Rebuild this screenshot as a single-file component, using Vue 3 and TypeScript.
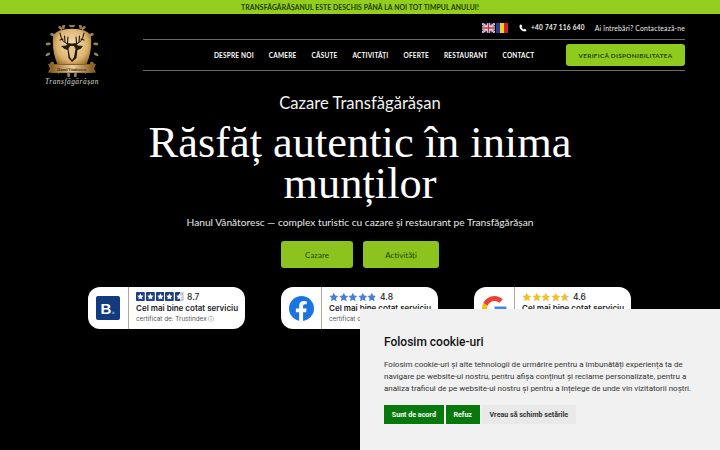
<script setup lang="ts">
const navItems = ["DESPRE NOI", "CAMERE", "CĂSUȚE", "ACTIVITĂȚI", "OFERTE", "RESTAURANT", "CONTACT"];

interface Review {
  id: string;
  score: string;
  fill: string;
  lastStar: number;
}

const reviews: Review[] = [
  { id: "b", score: "8.7", fill: "#1c3f87", lastStar: 55 },
  { id: "f", score: "4.8", fill: "#4a7fd6", lastStar: 90 },
  { id: "g", score: "4.6", fill: "#f2bf2e", lastStar: 60 },
];

const starPath = "M5 .6l1.4 2.9 3.2.4-2.3 2.2.6 3.2L5 7.8 2.1 9.3l.6-3.2L.4 3.9l3.2-.4z";

// laurel leaves running up both sides of the crest
const leaves = Array.from({ length: 9 }, (_, i) => {
  const a = (200 - i * 24) * (Math.PI / 180);
  return { x: 28 + Math.cos(a + Math.PI / 2) * 24.5, y: 25 + Math.sin(a + Math.PI / 2) * 25, r: i * 22 - 80 };
});
</script>

<template>
  <div class="page">
    <div class="promo">TRANSFĂGĂRĂȘANUL ESTE DESCHIS PÂNĂ LA NOI TOT TIMPUL ANULUI!</div>

    <header class="header">
      <a class="logo">
        <svg width="56" height="52" viewBox="0 0 56 52">
          <defs>
            <radialGradient id="gold" cx="0.5" cy="0.4" r="0.62">
              <stop offset="0" stop-color="#f6e2b6" />
              <stop offset="0.65" stop-color="#dcb36e" />
              <stop offset="1" stop-color="#8a5f20" />
            </radialGradient>
            <linearGradient id="band" x1="0" y1="0" x2="1" y2="0">
              <stop offset="0" stop-color="#8b6226" />
              <stop offset="0.5" stop-color="#edd09a" />
              <stop offset="1" stop-color="#8b6226" />
            </linearGradient>
          </defs>
          <g fill="#97835a">
            <g v-for="(l, i) in leaves" :key="i">
              <ellipse :cx="l.x" :cy="l.y" rx="2.600" ry="1.400" :transform="`rotate(${-l.r} ${l.x} ${l.y})`" />
              <ellipse :cx="56 - l.x" :cy="l.y" rx="2.600" ry="1.400" :transform="`rotate(${l.r} ${56 - l.x} ${l.y})`" />
            </g>
          </g>
          <path d="M9 12C10 1 46 1 47 12c1 12-2 24-7 32H16C11 36 8 24 9 12z" fill="url(#gold)" />
          <g fill="none" stroke="#1c130a" stroke-width="1.100" stroke-linecap="round">
            <path d="M26 19c-5 0-9-4-10-11M19 14l-3 1M21 16.500l-.5-5.500M23.500 18l.5-6" />
            <path d="M30 19c5 0 9-4 10-11M37 14l3 1M35 16.500l.5-5.500M32.500 18l-.5-6" />
          </g>
          <path d="M17 21l5-.5 2-2h8l2 2 5 .5-2.500 3-3 1-1 8L28 37l-3.500-4-1-8-3-1z" fill="#2a1c0d" />
          <path d="M26 21h4l1.500 3-1.500 8-2 3-2-3-1.500-8z" fill="#e3c48e" />
          <path d="M4 39l6-1v1h36v-1l6 1-2 4.500 2 4-6 .5H10l-6-.5 2-4z" fill="#8b6226" />
          <rect x="8" y="40" width="40" height="7.500" fill="url(#band)" />
          <text x="28" y="45.500" class="ribbon" text-anchor="middle">Hanul Vânătoresc</text>
        </svg>
        <span class="logo-name">Transfăgărășan</span>
      </a>

      <div class="header-main">
        <div class="contact-row">
          <span class="flags">
            <svg width="13" height="10" viewBox="0 0 14 10">
              <rect width="14" height="10" fill="#27407e" />
              <path d="M0 0l14 10M14 0L0 10" stroke="#fff" stroke-width="2" />
              <path d="M0 0l14 10M14 0L0 10" stroke="#c8283c" stroke-width=".7" />
              <path d="M7 0v10M0 5h14" stroke="#fff" stroke-width="3" />
              <path d="M7 0v10M0 5h14" stroke="#c8283c" stroke-width="1.600" />
            </svg>
            <svg width="12" height="10" viewBox="0 0 12 10">
              <rect width="4" height="10" fill="#233e8f" />
              <rect x="4" width="4" height="10" fill="#f4cf1e" />
              <rect x="8" width="4" height="10" fill="#c8202e" />
            </svg>
          </span>
          <span class="phone">
            <svg width="8" height="8" viewBox="0 0 24 24">
              <path d="M6.600 1.500l3.400 6-2.400 2.400c1.200 2.800 3.600 5.200 6.500 6.500l2.400-2.400 6 3.400c.2 2-1.500 5-4.500 5.100C9 22.800 1 14 1.500 6 1.700 3.200 4.600 1.300 6.600 1.500z" fill="#fff" />
            </svg>
            +40 747 116 640
          </span>
          <span class="ask">Ai întrebări? Contactează-ne</span>
        </div>
        <div class="nav-row">
          <nav class="nav">
            <a v-for="item in navItems" :key="item">{{ item }}</a>
          </nav>
          <a class="availability">VERIFICĂ DISPONIBILITATEA</a>
        </div>
      </div>
    </header>

    <main class="hero">
      <p class="eyebrow">Cazare Transfăgărășan</p>
      <h1>Răsfăț autentic în inima munților</h1>
      <p class="lead">Hanul Vânătoresc — complex turistic cu cazare și restaurant pe Transfăgărășan</p>
      <div class="actions">
        <a class="action wide">Cazare</a>
        <a class="action">Activități</a>
      </div>
    </main>

    <section class="reviews">
      <article v-for="r in reviews" :key="r.id" class="review">
        <div class="brand">
          <span v-if="r.id === 'b'" class="booking">B<i>.</i></span>
          <svg v-else-if="r.id === 'f'" width="25" height="25" viewBox="0 0 24 24">
            <circle cx="12" cy="12" r="12" fill="#1b74e4" />
            <path d="M16.400 15.500l.5-3.500h-3.400V9.800c0-1 .5-1.900 2-1.900h1.500V5c-.9-.1-1.800-.2-2.700-.2-2.800 0-4.600 1.700-4.600 4.700V12H6.600v3.500h3.100V24h3.800v-8.500z" fill="#fff" />
          </svg>
          <svg v-else width="25" height="25" viewBox="0 0 24 24">
            <path d="M12 4.900c1.800 0 3.300.6 4.600 1.700l3.400-3.400C17.900 1.300 15.100 0 12 0 7.300 0 3.300 2.700 1.300 6.600l3.900 3.100C6.200 6.900 8.800 4.900 12 4.900z" fill="#ea4335" />
            <path d="M1.300 6.600C.5 8.200 0 10 0 12s.5 3.800 1.300 5.400l3.900-3.100c-.2-.7-.4-1.500-.4-2.300s.1-1.600.4-2.300z" fill="#fbbc05" />
            <path d="M23.500 12.300c0-.9-.1-1.700-.2-2.300H12v4.500h6.500c-.3 1.500-1.100 2.700-2.400 3.500l3.700 2.900c2.300-2.100 3.700-5.200 3.700-8.600z" fill="#4285f4" />
            <path d="M12 24c3.200 0 6-1.100 7.800-2.900L16.100 18.200c-1 .7-2.400 1.100-4.100 1.100-3.200 0-5.800-2-6.800-4.900l-3.900 3C3.300 21.300 7.300 24 12 24z" fill="#34a853" />
          </svg>
        </div>
        <div class="rating">
          <div class="score-row">
            <span v-if="r.id === 'b'" class="stars boxed">
              <svg v-for="n in 5" :key="n" width="8.800" height="9" viewBox="0 0 9 9">
                <defs>
                  <linearGradient :id="`box-${n}`">
                    <stop :offset="`${n < 5 ? 100 : r.lastStar}%`" :stop-color="r.fill" />
                    <stop :offset="`${n < 5 ? 100 : r.lastStar}%`" stop-color="#c9ccd4" />
                  </linearGradient>
                </defs>
                <rect width="9" height="9" rx="1" :fill="`url(#box-${n})`" />
                <path d="M4.500 1.300l1 2.100 2.300.3-1.700 1.600.4 2.300-2-1.100-2 1.100.4-2.300L1.200 3.700l2.300-.3z" fill="#fff" />
              </svg>
            </span>
            <span v-else class="stars">
              <svg v-for="n in 5" :key="n" width="9.600" height="10" viewBox="0 0 10 10">
                <defs>
                  <linearGradient :id="`star-${r.id}-${n}`">
                    <stop :offset="`${n < 5 ? 100 : r.lastStar}%`" :stop-color="r.fill" />
                    <stop :offset="`${n < 5 ? 100 : r.lastStar}%`" stop-color="#c8c2ac" />
                  </linearGradient>
                </defs>
                <path :d="starPath" :fill="`url(#star-${r.id}-${n})`" />
              </svg>
            </span>
            <span class="score">{{ r.score }}</span>
          </div>
          <strong>Cel mai bine cotat serviciu</strong>
          <small>certificat de: Trustindex ⓘ</small>
        </div>
      </article>
    </section>

    <aside class="cookie">
      <h2>Folosim cookie-uri</h2>
      <p>Folosim cookie-uri și alte tehnologii de urmărire pentru a îmbunătăți experiența ta de navigare pe website-ul nostru, pentru afișa conținut și reclame personalizate, pentru a analiza traficul de pe website-ul nostru și pentru a înțelege de unde vin vizitatorii noștri.</p>
      <div class="cookie-actions">
        <button class="ok">Sunt de acord</button>
        <button class="ok">Refuz</button>
        <button class="settings">Vreau să schimb setările</button>
      </div>
    </aside>
  </div>
</template>

<style>
html, body { margin: 0; background: #000; }
</style>

<style scoped>
* { box-sizing: border-box; }

.page {
  position: relative;
  width: 720px;
  height: 450px;
  overflow: hidden;
  background: #000;
  color: #fff;
  font-family: "Lato", "Liberation Sans", sans-serif;
}

.promo {
  height: 14px;
  background: #93cd1e;
  color: #1d3a08;
  font: 700 6.800px/14px "Lato", sans-serif;
  letter-spacing: .1px;
  text-align: center;
}

/* header */
.header {
  display: flex;
  padding: 0 35px 0 44px;
}

.logo {
  display: flex;
  flex-direction: column;
  align-items: center;
  width: 56px;
  height: 72px;
  flex: none;
  padding-top: 11px;
}

.ribbon {
  font: 700 3.800px "Liberation Serif", serif;
  fill: #3c250b;
}

.logo-name {
  font: italic 400 7.400px/9px "Liberation Serif", serif;
  letter-spacing: .5px;
  color: #d8d8d0;
  white-space: nowrap;
}

.header-main {
  flex: 1;
  margin-left: 43px;
}

.contact-row {
  display: flex;
  justify-content: flex-end;
  align-items: center;
  height: 25px;
  padding-top: 2px;
  font-size: 6.800px;
  color: #eee;
}

.flags {
  display: flex;
  gap: 1px;
  margin-right: 11px;
}

.phone {
  display: flex;
  align-items: center;
  gap: 4px;
  margin-right: 10px;
  font-size: 6.500px;
  font-weight: 700;
  letter-spacing: .25px;
}

.ask {
  letter-spacing: .2px;
}

.nav-row {
  display: flex;
  align-items: center;
  justify-content: space-between;
  height: 32px;
  border-top: 1px solid #6b6b6b;
  border-bottom: 1px solid #6b6b6b;
}

.nav {
  display: flex;
  gap: 15px;
  margin-left: 71px;
  font-size: 6.500px;
  font-weight: 700;
  letter-spacing: .18px;
  white-space: nowrap;
}

.availability {
  display: flex;
  align-items: center;
  justify-content: center;
  width: 119px;
  height: 22px;
  border-radius: 3px;
  background: #8fcb1e;
  color: #24420c;
  font-size: 6.400px;
  font-weight: 700;
  letter-spacing: .3px;
}

/* hero */
.hero {
  display: flex;
  flex-direction: column;
  align-items: center;
  margin-top: 4px;
  text-align: center;
}

.eyebrow {
  margin: 0;
  font: 400 16.600px/26px "Lato", sans-serif;
  color: #f2f2f2;
}

h1 {
  width: 450px;
  margin: 6px 0 0;
  font: 400 44.400px/41px "Liberation Serif", serif;
}

.lead {
  margin: 10px 0 0;
  font: 400 10.200px/16px "Lato", sans-serif;
  color: #e8e8e8;
}

.actions {
  display: flex;
  gap: 10px;
  margin-top: 11px;
}

.action {
  display: flex;
  align-items: center;
  justify-content: center;
  width: 76px;
  height: 27px;
  border-radius: 3px;
  background: #8cc31f;
  color: #26450c;
  font-size: 8px;
}

.action.wide { width: 72px; }

/* reviews */
.reviews {
  display: flex;
  gap: 36px;
  margin: 19px 0 0 88px;
}

.review {
  display: flex;
  align-items: center;
  width: 157px;
  height: 42px;
  border-radius: 12px;
  background: #fff;
  color: #222;
}

.brand {
  display: flex;
  align-items: center;
  justify-content: center;
  width: 41px;
  height: 100%;
  flex: none;
  border-right: 1px solid #b5a995;
}

.booking {
  display: flex;
  align-items: center;
  justify-content: center;
  width: 24px;
  height: 24px;
  border-radius: 2px;
  background: #123a7d;
  color: #fff;
  font: 700 15px "Liberation Sans", sans-serif;
}

.booking i {
  color: #37a6e8;
  font-style: normal;
}

.rating {
  display: flex;
  flex-direction: column;
  padding: 0 0 2px 7px;
  white-space: nowrap;
}

.score-row {
  display: flex;
  align-items: center;
  gap: 3px;
  height: 12px;
}

.stars {
  display: flex;
}

.stars.boxed { gap: 1px; }

.score {
  font: 500 8.500px "Inter", sans-serif;
}

.rating strong {
  font: 600 8px/11px "Inter", sans-serif;
}

.rating small {
  font: 400 6.300px/10px "Inter", sans-serif;
  color: #555;
}

/* cookie */
.cookie {
  position: absolute;
  right: 0;
  bottom: 0;
  width: 360px;
  height: 141px;
  padding: 24px 24px 0;
  background: #f1f1f1;
  color: #333;
  font-family: "Roboto", sans-serif;
}

.cookie h2 {
  margin: 0;
  font: 500 12px/18px "Roboto", sans-serif;
  color: #111;
}

.cookie p {
  margin: 8px 0 0;
  font-size: 8px;
  line-height: 12px;
}

.cookie-actions {
  display: flex;
  gap: 2px;
  margin-top: 10px;
}

.cookie button {
  height: 19px;
  padding: 0 7.800px;
  border: 0;
  font: 700 7.100px "Roboto", sans-serif;
}

.cookie .ok {
  background: #07780c;
  color: #fff;
}

.cookie .settings {
  background: #e9e9e9;
  color: #333;
}
</style>
